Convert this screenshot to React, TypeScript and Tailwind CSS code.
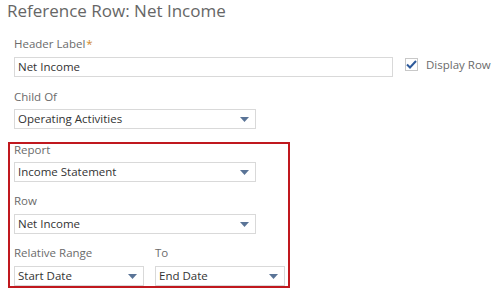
import React from "react"

function Arrow() {
  return (
    <svg width="9" height="5" viewBox="0 0 9 5" className="shrink-0">
      <path d="M0 0 L9 0 L4.5 5 Z" fill="#5a7497" />
    </svg>
  )
}

function Select({ value, width }: { value: string; width: string }) {
  return (
    <div
      className={`${width} h-[20px] flex items-center justify-between border border-[#d9d9d9] bg-white pl-[3px] pr-[6px] text-[11.5px] text-[#333] leading-[18px]`}
    >
      <span>{value}</span>
      <Arrow />
    </div>
  )
}

function Label({ children, className = "" }: { children: React.ReactNode; className?: string }) {
  return <div className={`text-[11.5px] leading-[12px] text-[#6b6b6b] ${className}`}>{children}</div>
}

export default function App() {
  return (
    <div className="w-[499px] h-[290px] bg-white overflow-hidden" style={{ fontFamily: "'Open Sans', sans-serif" }}>
      <div className="pl-[7px] text-[17px] leading-[22px] text-[#666]">Reference Row: Net Income</div>

      <div className="pl-[14px]">
        <Label className="mt-[16px] mb-[7px]">
          Header Label<span className="text-[#d08a2b] ml-[1px]">*</span>
        </Label>
        <div className="flex items-start">
          <div className="w-[379px] h-[20px] flex items-center border border-[#d9d9d9] pl-[3px] text-[11.5px] text-[#333]">
            Net Income
          </div>
          <div className="ml-[12px] mt-[1px] flex items-center">
            <div className="w-[13px] h-[13px] border border-[#c8c8c8] bg-white flex items-center justify-center">
              <svg width="11" height="9" viewBox="0 0 11 9">
                <path d="M1 4.5 L4 7.5 L10 1" stroke="#2d5a9b" strokeWidth="2" fill="none" />
              </svg>
            </div>
            <span className="ml-[8px] text-[11.5px] leading-[13px] text-[#6b6b6b]">Display Row</span>
          </div>
        </div>

        <Label className="mt-[14px] mb-[6px]">Child Of</Label>
        <Select value="Operating Activities" width="w-[242px]" />
      </div>

      <div className="ml-[8px] mt-[13px] w-[282px] h-[146px] border-2 border-[#c0181e] pl-[4px]">
        <Label className="mb-[6px]">Report</Label>
        <Select value="Income Statement" width="w-[242px]" />
        <Label className="mt-[13px] mb-[7px]">Row</Label>
        <Select value="Net Income" width="w-[242px]" />
        <div className="flex gap-[11px] mt-[13px]">
          <div>
            <Label className="mb-[7px]">Relative Range</Label>
            <Select value="Start Date" width="w-[130px]" />
          </div>
          <div>
            <Label className="mb-[7px]">To</Label>
            <Select value="End Date" width="w-[130px]" />
          </div>
        </div>
      </div>
    </div>
  )
}
